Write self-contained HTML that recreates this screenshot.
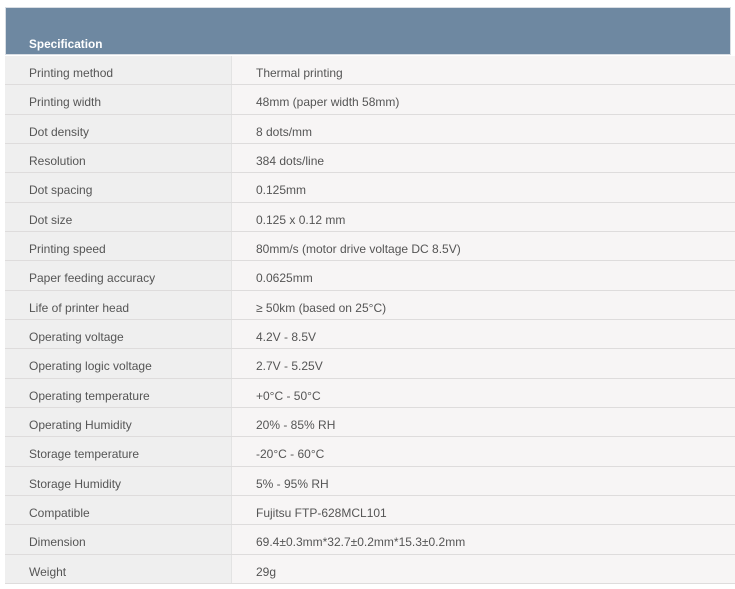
<!DOCTYPE html>
<html><head><style>
body{margin:0;width:735px;height:584px;background:#fff;overflow:hidden;font-family:"Liberation Sans",Arial,sans-serif;}
.hd{position:absolute;left:5px;top:7px;width:726px;height:48px;background:#6e88a1;border:1px solid #d8dde3;box-sizing:border-box;}
.hd span{position:absolute;left:23px;top:29px;color:#fff;font-weight:bold;font-size:11.8px;}
.row{position:absolute;left:5px;width:730px;height:29.33px;border-bottom:1px solid #dedcdc;box-sizing:border-box;font-size:12px;color:#555;}
.l{position:absolute;left:0;top:0;width:227px;height:100%;background:#efefef;border-right:1px solid #e3e3e3;box-sizing:border-box;padding-left:24px;line-height:34px;}
.r{position:absolute;left:227px;top:0;right:0;height:100%;background:#f7f5f5;padding-left:24px;line-height:34px;}
</style></head><body>
<div class="hd"><span>Specification</span></div>
<div class="row" style="top:56px"><div class="l">Printing method</div><div class="r">Thermal printing</div></div>
<div class="row" style="top:85.3px"><div class="l">Printing width</div><div class="r">48mm (paper width 58mm)</div></div>
<div class="row" style="top:114.7px"><div class="l">Dot density</div><div class="r">8 dots/mm</div></div>
<div class="row" style="top:144px"><div class="l">Resolution</div><div class="r">384 dots/line</div></div>
<div class="row" style="top:173.3px"><div class="l">Dot spacing</div><div class="r">0.125mm</div></div>
<div class="row" style="top:202.7px"><div class="l">Dot size</div><div class="r">0.125 x 0.12 mm</div></div>
<div class="row" style="top:232px"><div class="l">Printing speed</div><div class="r">80mm/s (motor drive voltage DC 8.5V)</div></div>
<div class="row" style="top:261.3px"><div class="l">Paper feeding accuracy</div><div class="r">0.0625mm</div></div>
<div class="row" style="top:290.7px"><div class="l">Life of printer head</div><div class="r">≥ 50km (based on 25°C)</div></div>
<div class="row" style="top:320px"><div class="l">Operating voltage</div><div class="r">4.2V - 8.5V</div></div>
<div class="row" style="top:349.3px"><div class="l">Operating logic voltage</div><div class="r">2.7V - 5.25V</div></div>
<div class="row" style="top:378.7px"><div class="l">Operating temperature</div><div class="r">+0°C - 50°C</div></div>
<div class="row" style="top:408px"><div class="l">Operating Humidity</div><div class="r">20% - 85% RH</div></div>
<div class="row" style="top:437.3px"><div class="l">Storage temperature</div><div class="r">-20°C - 60°C</div></div>
<div class="row" style="top:466.7px"><div class="l">Storage Humidity</div><div class="r">5% - 95% RH</div></div>
<div class="row" style="top:496px"><div class="l">Compatible</div><div class="r">Fujitsu FTP-628MCL101</div></div>
<div class="row" style="top:525.3px"><div class="l">Dimension</div><div class="r">69.4±0.3mm*32.7±0.2mm*15.3±0.2mm</div></div>
<div class="row" style="top:554.7px"><div class="l">Weight</div><div class="r">29g</div></div>
</body></html>
